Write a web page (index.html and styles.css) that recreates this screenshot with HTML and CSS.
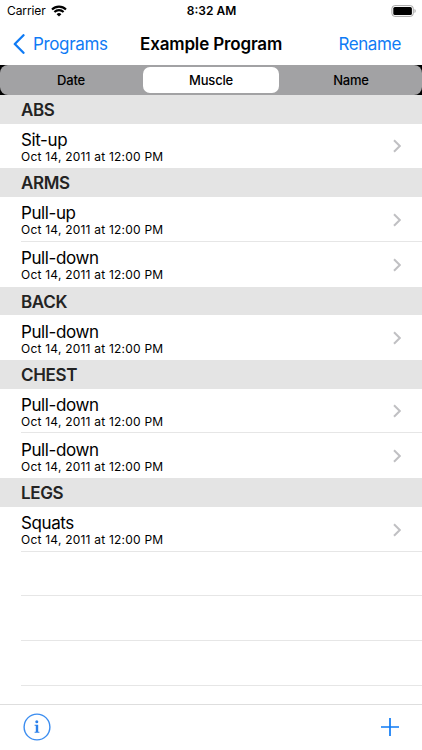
FILE: index.html
```html
<!DOCTYPE html>
<html lang="en">
<head>
	<meta charset="UTF-8">
	<title>Example Program</title>
	<link rel="stylesheet" href="styles.css">
</head>
<body>
	<div class="status">
		<div class="carrier">
			<span>Carrier</span>
			<svg class="wifi" width="16" height="12" viewBox="0 0 16 12">
				<path d="M1 4.5a9.9 9.9 0 0 1 14 0M3.4 7a6.5 6.5 0 0 1 9.2 0" fill="none" stroke="#000" stroke-width="2.1"/>
				<path d="M8 11.6L5.6 9.2a3.4 3.4 0 0 1 4.8 0z"/>
			</svg>
		</div>
		<span class="time">8:32 AM</span>
		<svg class="battery" width="25" height="12" viewBox="0 0 25 12">
			<rect x=".9" y=".6" width="21.4" height="10.8" rx="3" fill="none" stroke="#a6a6a6"/>
			<rect x="2.3" y="2" width="18.6" height="8" rx="1.6"/>
			<path d="M23.5 4v4c1.6-.7 1.6-3.3 0-4z" fill="#a6a6a6"/>
		</svg>
	</div>
	<div class="nav">
		<a class="back">
			<svg width="12" height="20" viewBox="0 0 12 20"><path d="M10.5 1.2L1.8 10l8.7 8.8" fill="none" stroke="#0f7bf5" stroke-width="2.3" stroke-linecap="round" stroke-linejoin="round"/></svg>
			<span>Programs</span>
		</a>
		<span class="title">Example Program</span>
		<a class="rename">Rename</a>
	</div>
	<div class="segment-bg">
		<div class="segment">
			<span>Date</span>
			<span class="on">Muscle</span>
			<span>Name</span>
		</div>
	</div>
	<div class="list">
		<h2>ABS</h2>
		<div class="row last">
			<div class="text"><p class="name">Sit-up</p><p class="date">Oct 14, 2011 at 12:00 PM</p></div>
			<svg class="arrow" width="8" height="14" viewBox="0 0 8 14"><path d="M1 1.2L6.8 7 1 12.8"/></svg>
		</div>
		<h2>ARMS</h2>
		<div class="row">
			<div class="text"><p class="name">Pull-up</p><p class="date">Oct 14, 2011 at 12:00 PM</p></div>
			<svg class="arrow" width="8" height="14" viewBox="0 0 8 14"><path d="M1 1.2L6.8 7 1 12.8"/></svg>
		</div>
		<div class="row last">
			<div class="text"><p class="name">Pull-down</p><p class="date">Oct 14, 2011 at 12:00 PM</p></div>
			<svg class="arrow" width="8" height="14" viewBox="0 0 8 14"><path d="M1 1.2L6.8 7 1 12.8"/></svg>
		</div>
		<h2>BACK</h2>
		<div class="row last">
			<div class="text"><p class="name">Pull-down</p><p class="date">Oct 14, 2011 at 12:00 PM</p></div>
			<svg class="arrow" width="8" height="14" viewBox="0 0 8 14"><path d="M1 1.2L6.8 7 1 12.8"/></svg>
		</div>
		<h2>CHEST</h2>
		<div class="row">
			<div class="text"><p class="name">Pull-down</p><p class="date">Oct 14, 2011 at 12:00 PM</p></div>
			<svg class="arrow" width="8" height="14" viewBox="0 0 8 14"><path d="M1 1.2L6.8 7 1 12.8"/></svg>
		</div>
		<div class="row last">
			<div class="text"><p class="name">Pull-down</p><p class="date">Oct 14, 2011 at 12:00 PM</p></div>
			<svg class="arrow" width="8" height="14" viewBox="0 0 8 14"><path d="M1 1.2L6.8 7 1 12.8"/></svg>
		</div>
		<h2>LEGS</h2>
		<div class="row">
			<div class="text"><p class="name">Squats</p><p class="date">Oct 14, 2011 at 12:00 PM</p></div>
			<svg class="arrow" width="8" height="14" viewBox="0 0 8 14"><path d="M1 1.2L6.8 7 1 12.8"/></svg>
		</div>
		<div class="row"></div>
		<div class="row"></div>
		<div class="row"></div>
		<div class="row"></div>
	</div>
	<div class="toolbar">
		<svg width="28" height="28" viewBox="0 0 28 28">
			<circle cx="14" cy="14" r="12.9" fill="none" stroke="#3b8df0" stroke-width="1.4"/>
			<circle cx="13.8" cy="8.7" r="1.5" fill="#2b80ea"/>
			<path d="M11.6 11.7h3.6v7.1h1.2v1h-4.8v-1h1.2v-6.1h-1.2z" fill="#2b80ea"/>
		</svg>
		<svg width="18" height="18" viewBox="0 0 18 18"><path d="M9 0v18M0 9h18" stroke="#0f7bf5" stroke-width="1.7"/></svg>
	</div>
</body>
</html>
```
FILE: styles.css
```css
*{
	margin: 0;
	padding: 0;
	box-sizing: border-box;
}
body{
	width: 422px;
	height: 750px;
	overflow: hidden;
	display: flex;
	flex-direction: column;
	background: #fff;
	color: #000;
	font-family: Inter, "Liberation Sans", sans-serif;
}
svg{display: block;}
.status{
	height: 22px;
	padding: 0 6px 0 7px;
	display: grid;
	grid-template-columns: 1fr auto 1fr;
	align-items: center;
	font-size: 12px;
	line-height: 22px;
}
.carrier{
	display: flex;
	align-items: center;
	gap: 5px;
	letter-spacing: -0.1px;
}
.time{font-weight: 600;}
.battery{justify-self: end;}
.nav{
	height: 43px;
	padding: 1px 21px 0 13px;
	display: grid;
	grid-template-columns: 127px 1fr auto;
	align-items: center;
	font-size: 17px;
	line-height: 42px;
}
.back, .rename{color: #0f7bf5;}
.back{
	display: flex;
	align-items: center;
	gap: 8px;
	letter-spacing: -0.35px;
}
.title{
	font-weight: 600;
	letter-spacing: -0.15px;
}
.rename{letter-spacing: -0.4px;}
.segment-bg{
	height: 30px;
	background: #000;
}
.segment{
	height: 30px;
	padding: 2px 3px;
	display: grid;
	grid-template-columns: 1fr 136px 1fr;
	gap: 4px;
	border-radius: 8px;
	background: #a2a2a4;
	font-size: 13px;
	font-weight: 500;
	line-height: 26px;
	letter-spacing: -0.2px;
	text-align: center;
}
.segment .on{
	border-radius: 7px;
	background: #fff;
}
.list{
	flex: 1;
	min-height: 0;
	overflow: hidden;
}
h2{
	height: 28.6px;
	padding-left: 21px;
	background: #e4e4e4;
	color: #232323;
	font-size: 17px;
	font-weight: 600;
	line-height: 30px;
	letter-spacing: -0.35px;
}
.row{
	height: 44.8px;
	margin-left: 21px;
	padding: 2px 21px 0 0;
	display: flex;
	align-items: center;
	justify-content: space-between;
	border-bottom: 1px solid #e6e6e6;
}
.last{border-color: transparent;}
.name{
	padding-top: 2px;
	font-size: 17px;
	line-height: 19px;
	letter-spacing: -0.4px;
}
.date{
	font-size: 12px;
	line-height: 14px;
	letter-spacing: 0.22px;
}
.arrow{
	fill: none;
	stroke: #c0c0c3;
	stroke-width: 2;
}
.toolbar{
	height: 46px;
	padding: 0 23px 2px;
	display: flex;
	align-items: center;
	justify-content: space-between;
	border-top: 1px solid #dedede;
}
```
